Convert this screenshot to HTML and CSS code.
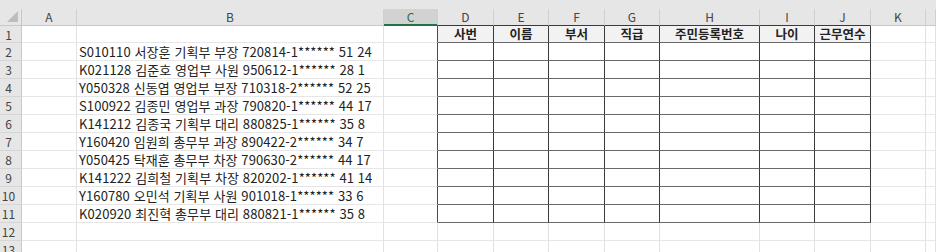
FILE: index.html
```html
<!DOCTYPE html>
<html lang="ko">
<head>
<meta charset="utf-8">
<link rel="stylesheet" href="styles.css">
</head>
<body>
<div class="band"></div>
<div class="sheet">
  <div class="corner"><div class="tri"></div></div>
  <div class="ch">A</div><div class="ch">B</div><div class="ch sel">C</div>
  <div class="ch tt">D</div><div class="ch tt">E</div><div class="ch tt">F</div><div class="ch tt">G</div><div class="ch tt">H</div><div class="ch tt">I</div><div class="ch tt">J</div>
  <div class="ch">K</div><div class="ch"></div>

  <div class="rh">1</div><div class="c"></div><div class="c"></div><div class="c tl"></div>
  <div class="c t th">사번</div><div class="c t th">이름</div><div class="c t th">부서</div><div class="c t th">직급</div><div class="c t th">주민등록번호</div><div class="c t th">나이</div><div class="c t th">근무연수</div>
  <div class="c"></div><div class="c"></div>

  <div class="rh">2</div><div class="c"></div><div class="c b">S010110 서장훈 기획부 부장 720814-1****** 51 24</div><div class="c tl"></div>
  <div class="c t"></div><div class="c t"></div><div class="c t"></div><div class="c t"></div><div class="c t"></div><div class="c t"></div><div class="c t"></div><div class="c"></div><div class="c"></div>

  <div class="rh">3</div><div class="c"></div><div class="c b">K021128 김준호 영업부 사원 950612-1****** 28 1</div><div class="c tl"></div>
  <div class="c t"></div><div class="c t"></div><div class="c t"></div><div class="c t"></div><div class="c t"></div><div class="c t"></div><div class="c t"></div><div class="c"></div><div class="c"></div>

  <div class="rh">4</div><div class="c"></div><div class="c b">Y050328 신동엽 영업부 부장 710318-2****** 52 25</div><div class="c tl"></div>
  <div class="c t"></div><div class="c t"></div><div class="c t"></div><div class="c t"></div><div class="c t"></div><div class="c t"></div><div class="c t"></div><div class="c"></div><div class="c"></div>

  <div class="rh">5</div><div class="c"></div><div class="c b">S100922 김종민 영업부 과장 790820-1****** 44 17</div><div class="c tl"></div>
  <div class="c t"></div><div class="c t"></div><div class="c t"></div><div class="c t"></div><div class="c t"></div><div class="c t"></div><div class="c t"></div><div class="c"></div><div class="c"></div>

  <div class="rh">6</div><div class="c"></div><div class="c b">K141212 김종국 기획부 대리 880825-1****** 35 8</div><div class="c tl"></div>
  <div class="c t"></div><div class="c t"></div><div class="c t"></div><div class="c t"></div><div class="c t"></div><div class="c t"></div><div class="c t"></div><div class="c"></div><div class="c"></div>

  <div class="rh">7</div><div class="c"></div><div class="c b">Y160420 임원희 총무부 과장 890422-2****** 34 7</div><div class="c tl"></div>
  <div class="c t"></div><div class="c t"></div><div class="c t"></div><div class="c t"></div><div class="c t"></div><div class="c t"></div><div class="c t"></div><div class="c"></div><div class="c"></div>

  <div class="rh">8</div><div class="c"></div><div class="c b">Y050425 탁재훈 총무부 차장 790630-2****** 44 17</div><div class="c tl"></div>
  <div class="c t"></div><div class="c t"></div><div class="c t"></div><div class="c t"></div><div class="c t"></div><div class="c t"></div><div class="c t"></div><div class="c"></div><div class="c"></div>

  <div class="rh">9</div><div class="c"></div><div class="c b">K141222 김희철 기획부 차장 820202-1****** 41 14</div><div class="c tl"></div>
  <div class="c t"></div><div class="c t"></div><div class="c t"></div><div class="c t"></div><div class="c t"></div><div class="c t"></div><div class="c t"></div><div class="c"></div><div class="c"></div>

  <div class="rh">10</div><div class="c"></div><div class="c b">Y160780 오민석 기획부 사원 901018-1****** 33 6</div><div class="c tl"></div>
  <div class="c t"></div><div class="c t"></div><div class="c t"></div><div class="c t"></div><div class="c t"></div><div class="c t"></div><div class="c t"></div><div class="c"></div><div class="c"></div>

  <div class="rh">11</div><div class="c"></div><div class="c b">K020920 최진혁 총무부 대리 880821-1****** 35 8</div><div class="c tl"></div>
  <div class="c t"></div><div class="c t"></div><div class="c t"></div><div class="c t"></div><div class="c t"></div><div class="c t"></div><div class="c t"></div><div class="c"></div><div class="c"></div>

  <div class="rh">12</div><div class="c"></div><div class="c"></div><div class="c"></div><div class="c"></div><div class="c"></div><div class="c"></div><div class="c"></div><div class="c"></div><div class="c"></div><div class="c"></div><div class="c"></div><div class="c"></div>

  <div class="rh">13</div><div class="c"></div><div class="c"></div><div class="c"></div><div class="c"></div><div class="c"></div><div class="c"></div><div class="c"></div><div class="c"></div><div class="c"></div><div class="c"></div><div class="c"></div><div class="c"></div>
</div>
</body>
</html>
```

FILE: styles.css
```css
html, body {
  margin: 0;
  padding: 0;
  background: #ffffff;
  overflow: hidden;
}
body {
  width: 936px;
  height: 252px;
  font-family: "Noto Sans CJK KR", "Noto Sans", sans-serif;
}
.band {
  height: 9px;
  background: #e6e6e6;
}
.sheet {
  display: grid;
  grid-template-columns: 22px 55px 307px 54px 56px 55px 56px 55px 100px 55px 56px 55px 1fr;
  grid-template-rows: 17px 17px repeat(12, 18px);
}
.sheet > div {
  box-sizing: border-box;
  min-width: 0;
  overflow: hidden;
  white-space: nowrap;
}
.corner {
  background: #e6e6e6;
  border-right: 1px solid #c8c8c8;
  border-bottom: 1px solid #c8c8c8;
  display: flex;
  justify-content: flex-end;
  align-items: flex-end;
  padding: 0 3px 3px 0;
}
.tri {
  width: 11px;
  height: 11px;
  background: #bdbdbd;
  clip-path: polygon(100% 0, 100% 100%, 0 100%);
}
.ch {
  background: #e6e6e6;
  border-right: 1px solid #d0d0d0;
  border-bottom: 1px solid #c8c8c8;
  color: #444444;
  font-size: 12px;
  line-height: 16px;
  text-align: center;
}
.ch.sel {
  background: #d2d2d2;
  color: #217346;
  border-bottom: 2px solid #217346;
}
.ch.tt {
  border-bottom: 1px solid #3a3a3a;
}
.rh {
  background: #e6e6e6;
  border-right: 1px solid #c8c8c8;
  border-bottom: 1px solid #d6d6d6;
  color: #444444;
  font-size: 12px;
  line-height: 17px;
  text-align: center;
  padding-right: 4px;
}
.c {
  border-right: 1px solid #e1e1e1;
  border-bottom: 1px solid #e6e6e6;
  font-size: 13px;
  line-height: 17px;
  color: #222222;
}
.c.b {
  padding-left: 2px;
  overflow: visible;
  letter-spacing: 0.1px;
}
.c.tl {
  border-right: 1px solid #4a4a4a;
}
.c.t {
  border-right: 1px solid #3a3a3a;
  border-bottom: 1px solid #6a6a6a;
}
.sheet > .c.th {
  background: #f2f2f2;
  font-weight: 700;
  font-size: 12.5px;
  text-align: center;
  color: #222222;
  line-height: 16px;
  overflow: visible;
}
```
